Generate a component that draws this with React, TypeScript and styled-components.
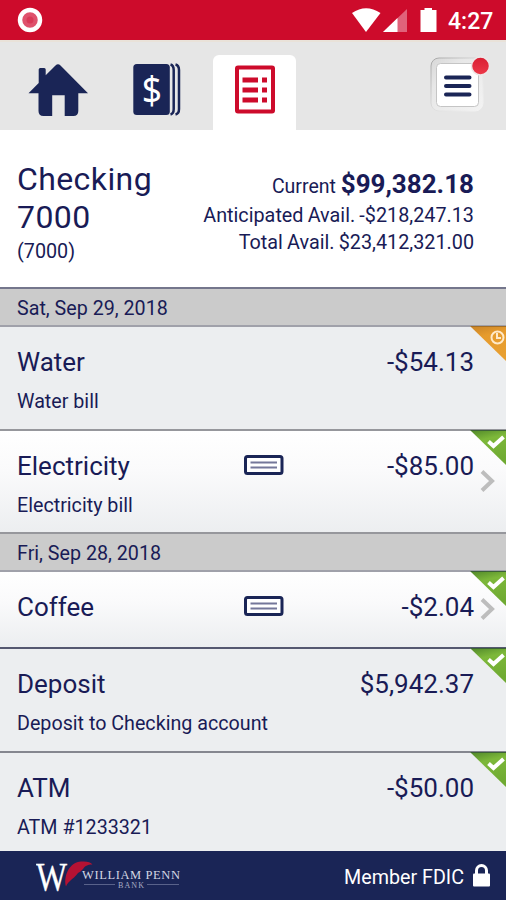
import React from 'react';
import styled, { createGlobalStyle, css } from 'styled-components';

const NAVY = '#1a2556';
const INK = '#191b56';
const RED = '#cd0b2b';

const GlobalStyle = createGlobalStyle`
  * { box-sizing: border-box; }
  body { margin: 0; background: #eceef0; font-family: Roboto, sans-serif; color: ${INK}; }
  svg { display: block; }
`;

const Screen = styled.div`
  width: 506px;
  height: 900px;
  display: flex;
  flex-direction: column;
  overflow: hidden;
`;

const StatusBar = styled.div`
  height: 40px;
  flex: none;
  display: flex;
  align-items: center;
  justify-content: space-between;
  padding: 0 12px 0 17px;
  background: ${RED};
`;

const StatusIcons = styled.div`
  display: flex;
  align-items: center;
`;

const Clock = styled.span`
  width: 46px;
  margin-left: 11px;
  font-size: 23px;
  font-weight: 500;
  line-height: 38px;
  padding-top: 4px;
  color: #fff;
  white-space: nowrap;
`;

const TabBar = styled.nav`
  height: 90px;
  flex: none;
  display: flex;
  align-items: flex-end;
  background: #e6e6e6;
  border-top: 2px solid #e9e2d9;
`;

const Tab = styled.div<{ $width: number; $active?: boolean }>`
  width: ${(p) => p.$width}px;
  height: 75px;
  border-radius: 6px 6px 0 0;
  background: ${(p) => (p.$active ? '#fff' : 'transparent')};
`;

const MenuSlot = styled.div`
  margin-left: auto;
  height: 88px;
`;

const Account = styled.section`
  height: 159px;
  flex: none;
  display: flex;
  justify-content: space-between;
  padding: 30px 32px 0 17px;
  background: #fff;
  border-bottom: 2px solid #74768c;
`;

const AccountName = styled.h1`
  width: 150px;
  margin: 0;
  font-size: 32px;
  font-weight: 400;
  line-height: 38px;
  letter-spacing: 0.4px;
`;

const AccountNumber = styled.div`
  font-size: 19.8px;
  line-height: 32px;
`;

const Balances = styled.div`
  padding-top: 7px;
  text-align: right;
`;

const Balance = styled.div<{ $lead?: boolean }>`
  height: ${(p) => (p.$lead ? 35 : 27)}px;
  font-size: ${(p) => (p.$lead ? 19.5 : 19.8)}px;
  line-height: ${(p) => (p.$lead ? 34 : 27)}px;
  word-spacing: ${(p) => (p.$lead ? 0 : -0.7)}px;
  white-space: nowrap;
`;

const Strong = styled.strong`
  font-size: 26px;
  font-weight: 700;
`;

const DateHeader = styled.h2<{ $height: number }>`
  height: ${(p) => p.$height}px;
  flex: none;
  display: flex;
  align-items: center;
  margin: 0;
  padding: 3px 17px 0;
  font-size: 19.7px;
  font-weight: 400;
  background: #cbcbcb;
  border-bottom: 2px solid #a0a1aa;
`;

const Row = styled.div<{ $height: number; $link?: boolean; $line?: string }>`
  position: relative;
  height: ${(p) => p.$height}px;
  flex: none;
  padding: 16px 32px 0 17px;
  background: #eceef0;
  border-bottom: 2px solid ${(p) => p.$line || '#96979c'};
  ${(p) => p.$link && css`background: linear-gradient(#fff, #fafafb 40%, #eceef0);`}
`;

const RowMain = styled.div`
  display: grid;
  grid-template-columns: 227px 40px 1fr;
  align-items: center;
  font-size: 26px;
  line-height: 38px;

  svg { margin-bottom: 3px; }
`;

const Amount = styled.span`
  grid-column: 3;
  text-align: right;
`;

const Memo = styled.div`
  font-size: 19.7px;
  line-height: 42px;
`;

const Corner = styled.div`
  position: absolute;
  top: -1px;
  right: 0;
`;

const Chevron = styled.div`
  position: absolute;
  right: 10px;
  top: 50%;
  margin-top: -13px;
`;

const Footer = styled.footer`
  height: 49px;
  flex: none;
  display: flex;
  align-items: center;
  justify-content: space-between;
  padding: 0 16px 0 36px;
  background: ${NAVY};
  color: #fff;
`;

const Member = styled.div`
  display: flex;
  align-items: center;
  gap: 9px;
  font-size: 19.7px;
  line-height: 47px;

  span { padding-top: 3px; }
`;

const HomeIcon = () => (
  <svg width="125" height="75" viewBox="0 0 125 75">
    <path fill={NAVY} d="M28.500 38.300 38.700 28V14.500Q38.700 13 40.200 13H44.200Q45.700 13 45.700 14.500V20.200L55.500 10.500Q58 8 60.500 10.500L88 38.300H78.300V56Q78.300 61 73.300 61H64.700V40.300H52.200V61H43.500Q38.500 61 38.500 56V38.300Z" />
  </svg>
);

const Statement = styled.div`
  position: relative;
`;

const Dollar = styled.span`
  position: absolute;
  left: 16px;
  top: 12px;
  font: 38px/44px "Noto Sans", sans-serif;
  transform: scaleX(0.93);
  color: #fff;
`;

const MoneyIcon = () => (
  <Statement>
    <svg width="88" height="75" viewBox="0 0 88 75">
      <rect x="8.300" y="9" width="36.500" height="51" rx="3.500" fill={NAVY} />
      <path d="M45.500 9.500C48 10.200 48.700 12 48.700 15V54C48.700 57 48 58.800 45.500 59.500M50.500 9.500C53.300 10.200 54 12 54 15V54C54 57 53.300 58.800 50.500 59.500" fill="none" stroke={NAVY} strokeWidth="2.500" />
    </svg>
    <Dollar>$</Dollar>
  </Statement>
);

const ListIcon = () => (
  <svg width="83" height="75" viewBox="0 0 83 75">
    <rect x="24" y="12.500" width="36" height="44" rx="1" fill="none" stroke={RED} strokeWidth="4" />
    <path d="M29.500 25H45M29.500 35H45M29.500 45H45M49 25H54M49 35H54M49 45H54" stroke={RED} strokeWidth="5" />
  </svg>
);

const MenuIcon = () => (
  <svg width="78" height="88" viewBox="0 0 78 88">
    <defs>
      <linearGradient id="frame" x1="0" y1="0" x2="1" y2="1">
        <stop offset="0" stopColor="#d8d8d8" /><stop offset=".3" stopColor="#e7e7e7" /><stop offset="1" stopColor="#f3f3f3" />
      </linearGradient>
      <linearGradient id="rim" x1="0" y1="0" x2="1" y2="1">
        <stop offset="0" stopColor="#a5a5a5" /><stop offset=".5" stopColor="#dedede" /><stop offset="1" stopColor="#f4f4f4" />
      </linearGradient>
      <linearGradient id="alert" x1="0" y1="0" x2="0" y2="1">
        <stop stopColor="#d91d32" /><stop offset="1" stopColor="#ed3949" />
      </linearGradient>
    </defs>
    <rect x="3" y="16" width="52" height="53" rx="8" fill="url(#frame)" stroke="url(#rim)" />
    <rect x="8.500" y="21.500" width="42" height="43" rx="4" fill="#fff" stroke="#c5c5c5" />
    <path d="M18 35.500H41.500M18 44H41.500M18 52.500H41.500" stroke={NAVY} strokeWidth="4" strokeLinecap="round" />
    <circle cx="52.500" cy="24" r="9" fill="url(#alert)" stroke="#eee6e7" strokeWidth="1.500" />
  </svg>
);

const CheckSlip = () => (
  <svg width="40" height="20" viewBox="0 0 40 20">
    <rect x="1.500" y="1.500" width="36.500" height="17" rx="2" fill="#fff" stroke={NAVY} strokeWidth="3" />
    <path d="M6.500 7.500H33M6.500 12.500H33" stroke="#74779a" strokeWidth="2" />
  </svg>
);

const Badge = ({ pending }: { pending?: boolean }) => (
  <Corner>
    <svg width="36" height="36" viewBox="0 0 36 36">
      <defs>
        <linearGradient id={pending ? 'amber' : 'green'} x1="0" y1="0" x2=".25" y2="1">
          <stop stopColor={pending ? '#c88327' : '#4f8629'} />
          <stop offset=".35" stopColor={pending ? '#e69b2d' : '#7db83a'} />
          <stop offset="1" stopColor={pending ? '#e89f31' : '#6faa32'} />
        </linearGradient>
      </defs>
      <path d="M0 0H36V35Z" fill={`url(#${pending ? 'amber' : 'green'})`} />
      <path d="M1 .5H36" stroke={pending ? '#a36e27' : '#3c6038'} />
      {pending ? (
        <g fill="none" stroke="#ffe9c8" strokeWidth="2">
          <circle cx="27.500" cy="11.500" r="6" /><path d="M27 7V12H31" />
        </g>
      ) : (
        <path d="M18.500 11.500 23.500 16 33.500 7" fill="none" stroke="#fff" strokeWidth="4" />
      )}
    </svg>
  </Corner>
);

const Arrow = () => (
  <Chevron>
    <svg width="16" height="24" viewBox="0 0 16 24">
      <path d="M2 2.500 12 12 2 21.500" fill="none" stroke="#bdbdbd" strokeWidth="4" />
    </svg>
  </Chevron>
);

const Brand = () => (
  <svg width="148" height="49" viewBox="0 0 148 49" fontFamily='"Liberation Serif", serif'>
    <text x="0" y="38.500" fontSize="39" fill="#fff" stroke="#fff" strokeWidth=".3" textLength="31" lengthAdjust="spacingAndGlyphs">W</text>
    <path d="M30 35.500C27 25 34 10.500 45 10.500C51 10 54.500 11 56.500 13.500C51 13.500 49 15 47 18C45 20 44 21 42 22C40 25 36 28 34 30C32 32 31 33 30 35.500Z" fill="#b51233" />
    <text x="46" y="27.500" fontSize="12.500" fill="#d3d6e3" textLength="98">WILLIAM PENN</text>
    <text x="82" y="37" fontSize="8" fill="#a9aec5" textLength="26">BANK</text>
    <path d="M48 33.500H79M111 33.500H143" stroke="#59628a" />
  </svg>
);

type Entry = { title: string; amount: string; memo?: string; height: number; link?: boolean; pending?: boolean; line?: string };

const Transaction = ({ title, amount, memo, height, link, pending, line }: Entry) => (
  <Row $height={height} $link={link} $line={line}>
    <RowMain>
      <span>{title}</span>
      {link && <CheckSlip />}
      <Amount>{amount}</Amount>
    </RowMain>
    {memo && <Memo>{memo}</Memo>}
    <Badge pending={pending} />
    {link && <Arrow />}
  </Row>
);

export default function App() {
  return (
    <Screen>
      <GlobalStyle />
      <StatusBar>
        <svg width="26" height="26" viewBox="0 0 26 26">
          <circle cx="13" cy="13" r="10" fill="#df526d" stroke="#fff" strokeWidth="4.500" />
          <circle cx="13" cy="13" r="3.500" fill="#d93957" />
        </svg>
        <StatusIcons>
          <svg width="86" height="26" viewBox="0 0 86 26">
            <path d="M1 6Q15-3.500 29.500 6L15 25Z" fill="#fff" />
            <path d="M56 2V25H32Z" fill="#e0637b" /><path d="M46.500 11V25H32Z" fill="#fff" />
            <path d="M69.500 3H73.500V1H81V3H85.500V25H69.500Z" fill="#fff" />
          </svg>
          <Clock>4:27</Clock>
        </StatusIcons>
      </StatusBar>
      <TabBar>
        <Tab $width={125}><HomeIcon /></Tab>
        <Tab $width={88}><MoneyIcon /></Tab>
        <Tab $width={83} $active><ListIcon /></Tab>
        <MenuSlot><MenuIcon /></MenuSlot>
      </TabBar>
      <Account>
        <div>
          <AccountName>Checking 7000</AccountName>
          <AccountNumber>(7000)</AccountNumber>
        </div>
        <Balances>
          <Balance $lead>Current <Strong>$99,382.18</Strong></Balance>
          <Balance>Anticipated Avail. -$218,247.13</Balance>
          <Balance>Total Avail. $23,412,321.00</Balance>
        </Balances>
      </Account>
      <DateHeader $height={38}>Sat, Sep 29, 2018</DateHeader>
      <Transaction title="Water" amount="-$54.13" memo="Water bill" height={104} pending />
      <Transaction title="Electricity" amount="-$85.00" memo="Electricity bill" height={103} link />
      <DateHeader $height={38}>Fri, Sep 28, 2018</DateHeader>
      <Transaction title="Coffee" amount="-$2.04" height={77} link line="#555870" />
      <Transaction title="Deposit" amount="$5,942.37" memo="Deposit to Checking account" height={104} line="#85878f" />
      <Transaction title="ATM" amount="-$50.00" memo="ATM #1233321" height={98} line="#eceef0" />
      <Footer>
        <Brand />
        <Member>
          <span>Member FDIC</span>
          <svg width="17" height="23" viewBox="0 0 17 23">
            <rect y="9.500" width="17" height="13" rx="1" fill="#fff" />
            <path d="M3.500 11V6.500a5 5 0 0 1 10 0V11" fill="none" stroke="#fff" strokeWidth="3" />
          </svg>
        </Member>
      </Footer>
    </Screen>
  );
}
